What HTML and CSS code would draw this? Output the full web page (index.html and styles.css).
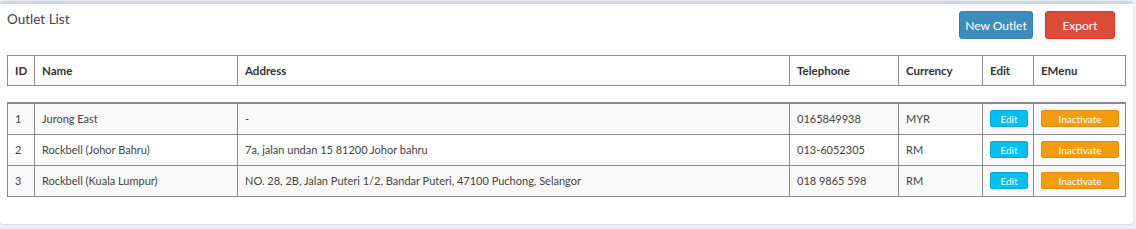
FILE: index.html
```html
<html>
    <head>
        <link rel="stylesheet" href="styles.css">
    </head>
    <body>
        <div class="box">
            <div class="box-header">
                <h3 class="box-title">Outlet List</h3>
                <div class="box-tools">
                    <button class="btn btn-primary">New Outlet</button>
                    <button class="btn btn-danger">Export</button>
                </div>
            </div>
            <div class="box-body">
                <table class="grid grid-head">
                    <colgroup>
                        <col class="c-id"><col class="c-name"><col class="c-addr"><col class="c-tel"><col class="c-cur"><col class="c-edit"><col class="c-menu">
                    </colgroup>
                    <tr>
                        <th>ID</th><th>Name</th><th>Address</th><th>Telephone</th><th>Currency</th><th>Edit</th><th>EMenu</th>
                    </tr>
                </table>
                <table class="grid grid-body">
                    <colgroup>
                        <col class="c-id"><col class="c-name"><col class="c-addr"><col class="c-tel"><col class="c-cur"><col class="c-edit"><col class="c-menu">
                    </colgroup>
                    <tr class="odd">
                        <td>1</td><td>Jurong East</td><td>-</td><td>0165849938</td><td>MYR</td>
                        <td><button class="btn-xs btn-info">Edit</button></td>
                        <td><button class="btn-xs btn-warning">Inactivate</button></td>
                    </tr>
                    <tr>
                        <td>2</td><td>Rockbell (Johor Bahru)</td><td>7a, jalan undan 15 81200 Johor bahru</td><td>013-6052305</td><td>RM</td>
                        <td><button class="btn-xs btn-info">Edit</button></td>
                        <td><button class="btn-xs btn-warning">Inactivate</button></td>
                    </tr>
                    <tr class="odd">
                        <td>3</td><td>Rockbell (Kuala Lumpur)</td><td>NO. 28, 2B, Jalan Puteri 1/2, Bandar Puteri, 47100 Puchong, Selangor</td><td>018 9865 598</td><td>RM</td>
                        <td><button class="btn-xs btn-info">Edit</button></td>
                        <td><button class="btn-xs btn-warning">Inactivate</button></td>
                    </tr>
                </table>
            </div>
        </div>
    </body>
</html>
```
FILE: styles.css
```css
body {
    margin: 0;
    background-color: #ecf0f5;
    font-family: Lato, "Open Sans", sans-serif;
    color: #333;
}

.box {
    background-color: #fff;
    border-top: 3px solid #d2d6de;
    border-radius: 3px;
    margin-top: 1px;
    width: 1133px;
    height: 223px;
    box-shadow: 0 1px 1px rgba(0,0,0,0.1);
    box-sizing: border-box;
}

.box-header {
    display: flex;
    justify-content: space-between;
    align-items: flex-start;
    padding: 0 18px 0 7px;
    height: 51px;
}

.box-title {
    margin: 7px 0 0 0;
    font-size: 13.5px;
    font-weight: normal;
    color: #444;
}

.box-tools {
    display: flex;
    gap: 12px;
    margin-top: 7px;
}

.btn {
    border: 1px solid transparent;
    border-radius: 3px;
    color: #fff;
    font-family: inherit;
    font-size: 12px;
    height: 28px;
    padding: 0;
    white-space: nowrap;
}

.btn-primary {
    background-color: #3c8dbc;
    border-color: #367fa9;
    width: 74px;
}

.btn-danger {
    background-color: #dd4b39;
    border-color: #d73925;
    width: 70px;
}

.box-body {
    padding: 0 8px 0 7px;
}

.grid {
    width: 1119px;
    table-layout: fixed;
    border-collapse: collapse;
    font-size: 11.5px;
}

.grid th, .grid td {
    border: 1px solid #8c8c8c;
    text-align: left;
    padding: 0 7px;
    white-space: nowrap;
    overflow: hidden;
}

.grid th {
    height: 30px;
    font-weight: bold;
    color: #333;
}

.grid-head {
    margin-bottom: 16px;
}

.grid-body tr:first-child td {
    border-top: 2px solid #888;
}

.grid td {
    height: 31px;
    color: #444;
    font-size: 11px;
}

.grid tr.odd td {
    background-color: #f9f9f9;
}

.c-id { width: 27px; }
.c-name { width: 203px; }
.c-addr { width: 552px; }
.c-tel { width: 109px; }
.c-cur { width: 84px; }
.c-edit { width: 51px; }
.c-menu { width: 92px; }

.btn-xs {
    border: 1px solid transparent;
    border-radius: 2px;
    color: #fff;
    font-family: inherit;
    font-size: 10px;
    height: 17px;
    padding: 0;
    display: block;
}

.btn-info {
    background-color: #00c0ef;
    border-color: #00acd6;
    width: 38px;
}

.btn-warning {
    background-color: #f39c12;
    border-color: #e08e0b;
    width: 78px;
}
```
